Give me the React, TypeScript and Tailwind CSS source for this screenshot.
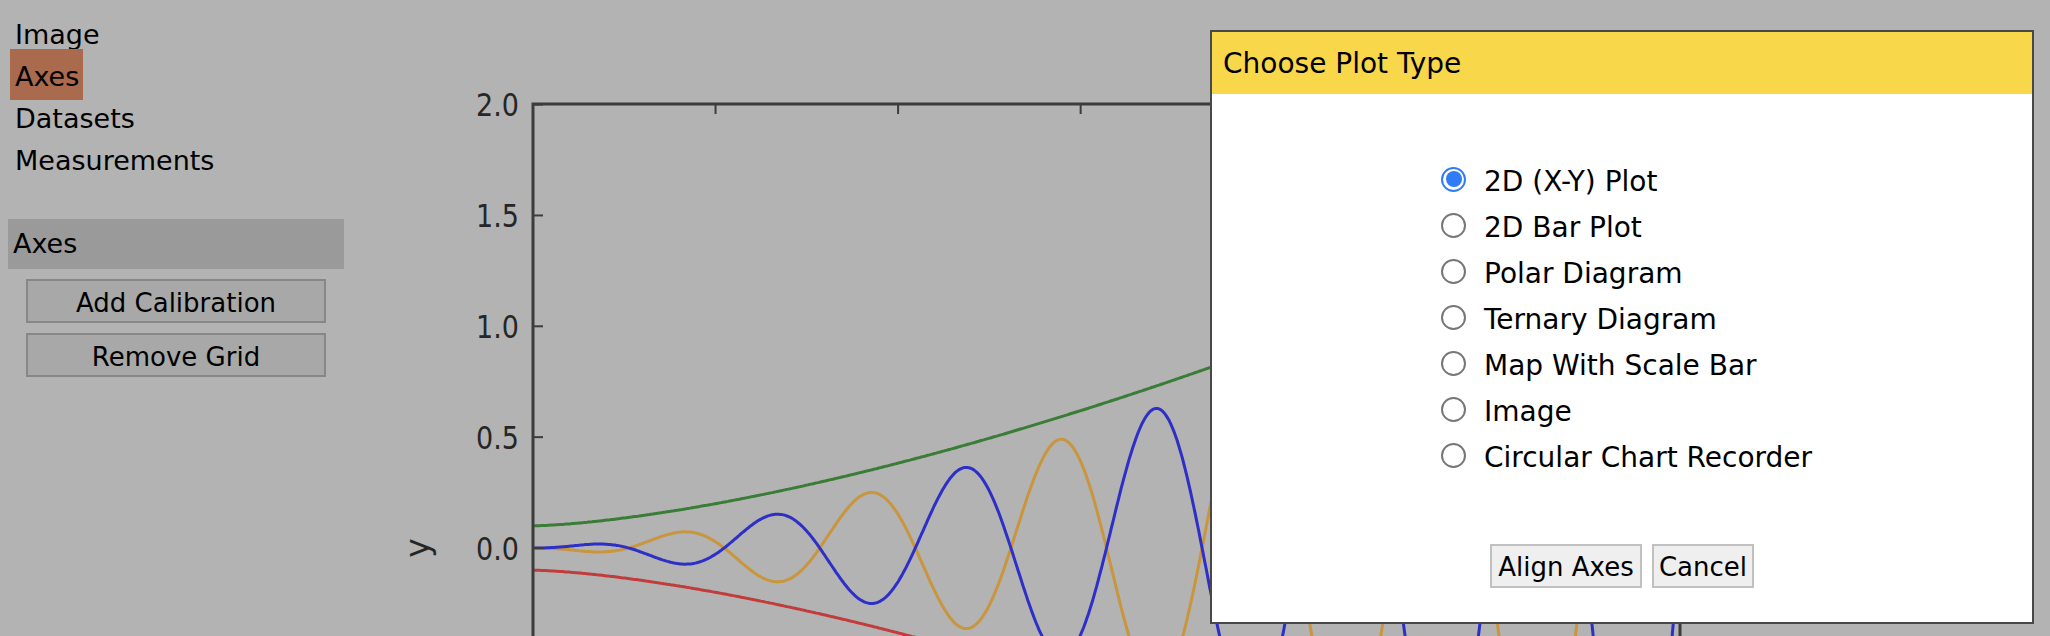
import React from 'react';

// ================= PLOT GEOMETRY =================
const X0 = 533;
const Y0 = 548;
const SX = 182.55; // px per x unit (x runs 0..2pi)
const SY = 221.7; // px per y unit
const X_END = X0 + 2 * Math.PI * SX;

function curve(fn: (x: number) => number) {
  const pts: string[] = [];
  for (let i = 0; i <= 700; i++) {
    const x = (i / 700) * 2 * Math.PI;
    pts.push(`${(X0 + x * SX).toFixed(1)},${(Y0 - fn(x) * SY).toFixed(1)}`);
  }
  return 'M' + pts.join(' L');
}

const env = (x: number) => 0.1 * Math.pow(x, 1.5);

const LINES = [
  { color: '#3a7d36', d: curve((x) => 0.1 + env(x)) },
  { color: '#c13c3a', d: curve((x) => -(0.1 + env(x))) },
  { color: '#c9953d', d: curve((x) => -env(x) * Math.sin(6 * x)) },
  { color: '#2d2fc6', d: curve((x) => env(x) * Math.sin(6 * x)) },
];

const Y_TICKS = [2.0, 1.5, 1.0, 0.5, 0.0];

const MENU = ['Image', 'Axes', 'Datasets', 'Measurements'];

const PLOT_TYPES = [
  '2D (X-Y) Plot',
  '2D Bar Plot',
  'Polar Diagram',
  'Ternary Diagram',
  'Map With Scale Bar',
  'Image',
  'Circular Chart Recorder',
];

function Plot() {
  return (
    <svg
      width={1670}
      height={636}
      viewBox="380 0 1670 636"
      className="block shrink-0"
    >
      {/* curves */}
      {LINES.map((l, i) => (
        <path
          key={i}
          d={l.d}
          fill="none"
          stroke={l.color}
          strokeWidth={3}
          strokeLinejoin="round"
        />
      ))}

      {/* axes frame */}
      <path
        d={`M${X0},700 L${X0},104 L${X_END},104 L${X_END},700`}
        fill="none"
        stroke="#3c3c3c"
        strokeWidth={3}
      />

      {/* top ticks */}
      {[1, 2, 3, 4, 5, 6].map((k) => (
        <line
          key={k}
          x1={X0 + k * SX}
          x2={X0 + k * SX}
          y1={104}
          y2={114}
          stroke="#3c3c3c"
          strokeWidth={2}
        />
      ))}

      {/* y ticks + labels */}
      {Y_TICKS.map((v) => {
        const y = Y0 - v * SY;
        return (
          <g key={v}>
            <line x1={X0} x2={X0 + 10} y1={y} y2={y} stroke="#3c3c3c" strokeWidth={2} />
            <text
              x={519}
              y={0}
              textAnchor="end"
              fill="#262626"
              fontSize={27}
              fontFamily="'DejaVu Sans', sans-serif"
              transform={`translate(0 ${y + 11.8}) scale(1 1.2)`}
            >
              {v.toFixed(1)}
            </text>
          </g>
        );
      })}

      {/* y axis label */}
      <text
        x={0}
        y={0}
        textAnchor="middle"
        fill="#262626"
        fontSize={33}
        fontFamily="'DejaVu Sans', sans-serif"
        transform={`translate(429 ${Y0}) rotate(-90)`}
      >
        y
      </text>
    </svg>
  );
}

function Sidebar() {
  return (
    <div className="w-[380px] shrink-0 text-black">
      {/* ================= MENU ================= */}
      <div className="pt-[14px] pl-[15px] text-[27px] leading-[42px]">
        {MENU.map((m) => (
          <div key={m} className="h-[42px] whitespace-nowrap">
            {m === 'Axes' ? (
              <span className="bg-[#a96a4e] -ml-[5px] pl-[5px] pr-[4px] pt-[12px] pb-[8px]">
                {m}
              </span>
            ) : (
              m
            )}
          </div>
        ))}
      </div>

      {/* ================= AXES PANEL ================= */}
      <div className="mt-[37px] ml-[8px] w-[336px]">
        <div className="h-[50px] bg-[#9a9a9a] pl-[5px] text-[27px] leading-[50px]">
          Axes
        </div>
        <div className="flex flex-col gap-[10px] pt-[10px] pl-[18px]">
          {['Add Calibration', 'Remove Grid'].map((b) => (
            <button
              key={b}
              className="w-[300px] h-[44px] border-2 border-[#878787] bg-[#a8a8a8] pt-[3px] text-center text-[26px] leading-[36px] text-black"
            >
              {b}
            </button>
          ))}
        </div>
      </div>
    </div>
  );
}

function Radio({ checked }: { checked: boolean }) {
  if (checked) {
    return (
      <span className="flex h-[25px] w-[25px] shrink-0 items-center justify-center rounded-full border-2 border-[#2f7cf6] bg-white">
        <span className="h-[16px] w-[16px] rounded-full bg-[#2f7cf6]" />
      </span>
    );
  }
  return (
    <span className="h-[25px] w-[25px] shrink-0 rounded-full border-2 border-[#777777] bg-white" />
  );
}

function PlotTypeDialog() {
  return (
    <div className="absolute left-[1210px] top-[30px] w-[824px] h-[594px] border-2 border-[#484848] bg-white text-black">
      <div className="h-[62px] bg-[#f8d74a] pl-[11px] pt-[2px] text-[28px] leading-[60px]">
        Choose Plot Type
      </div>

      <div className="pt-[62px] pl-[229px]">
        {PLOT_TYPES.map((t, i) => (
          <label key={t} className="flex h-[46px] items-center">
            <Radio checked={i === 0} />
            <span className="ml-[18px] pt-[6px] text-[28px] leading-[34px] whitespace-nowrap">
              {t}
            </span>
          </label>
        ))}
      </div>

      <div className="mt-[66px] flex justify-center gap-[10px]">
        <button className="w-[152px] h-[44px] border-2 border-[#c0c0c0] bg-[#efefef] pt-[2px] text-[26px] leading-[36px] text-black">
          Align Axes
        </button>
        <button className="w-[102px] h-[44px] border-2 border-[#c0c0c0] bg-[#efefef] pt-[2px] text-[26px] leading-[36px] text-black">
          Cancel
        </button>
      </div>
    </div>
  );
}

export default function App() {
  return (
    <div
      className="relative flex w-[2050px] h-[636px] overflow-hidden bg-[#b3b3b3]"
      style={{ fontFamily: "'DejaVu Sans', Verdana, sans-serif" }}
    >
      <Sidebar />
      <Plot />
      <PlotTypeDialog />
    </div>
  );
}
